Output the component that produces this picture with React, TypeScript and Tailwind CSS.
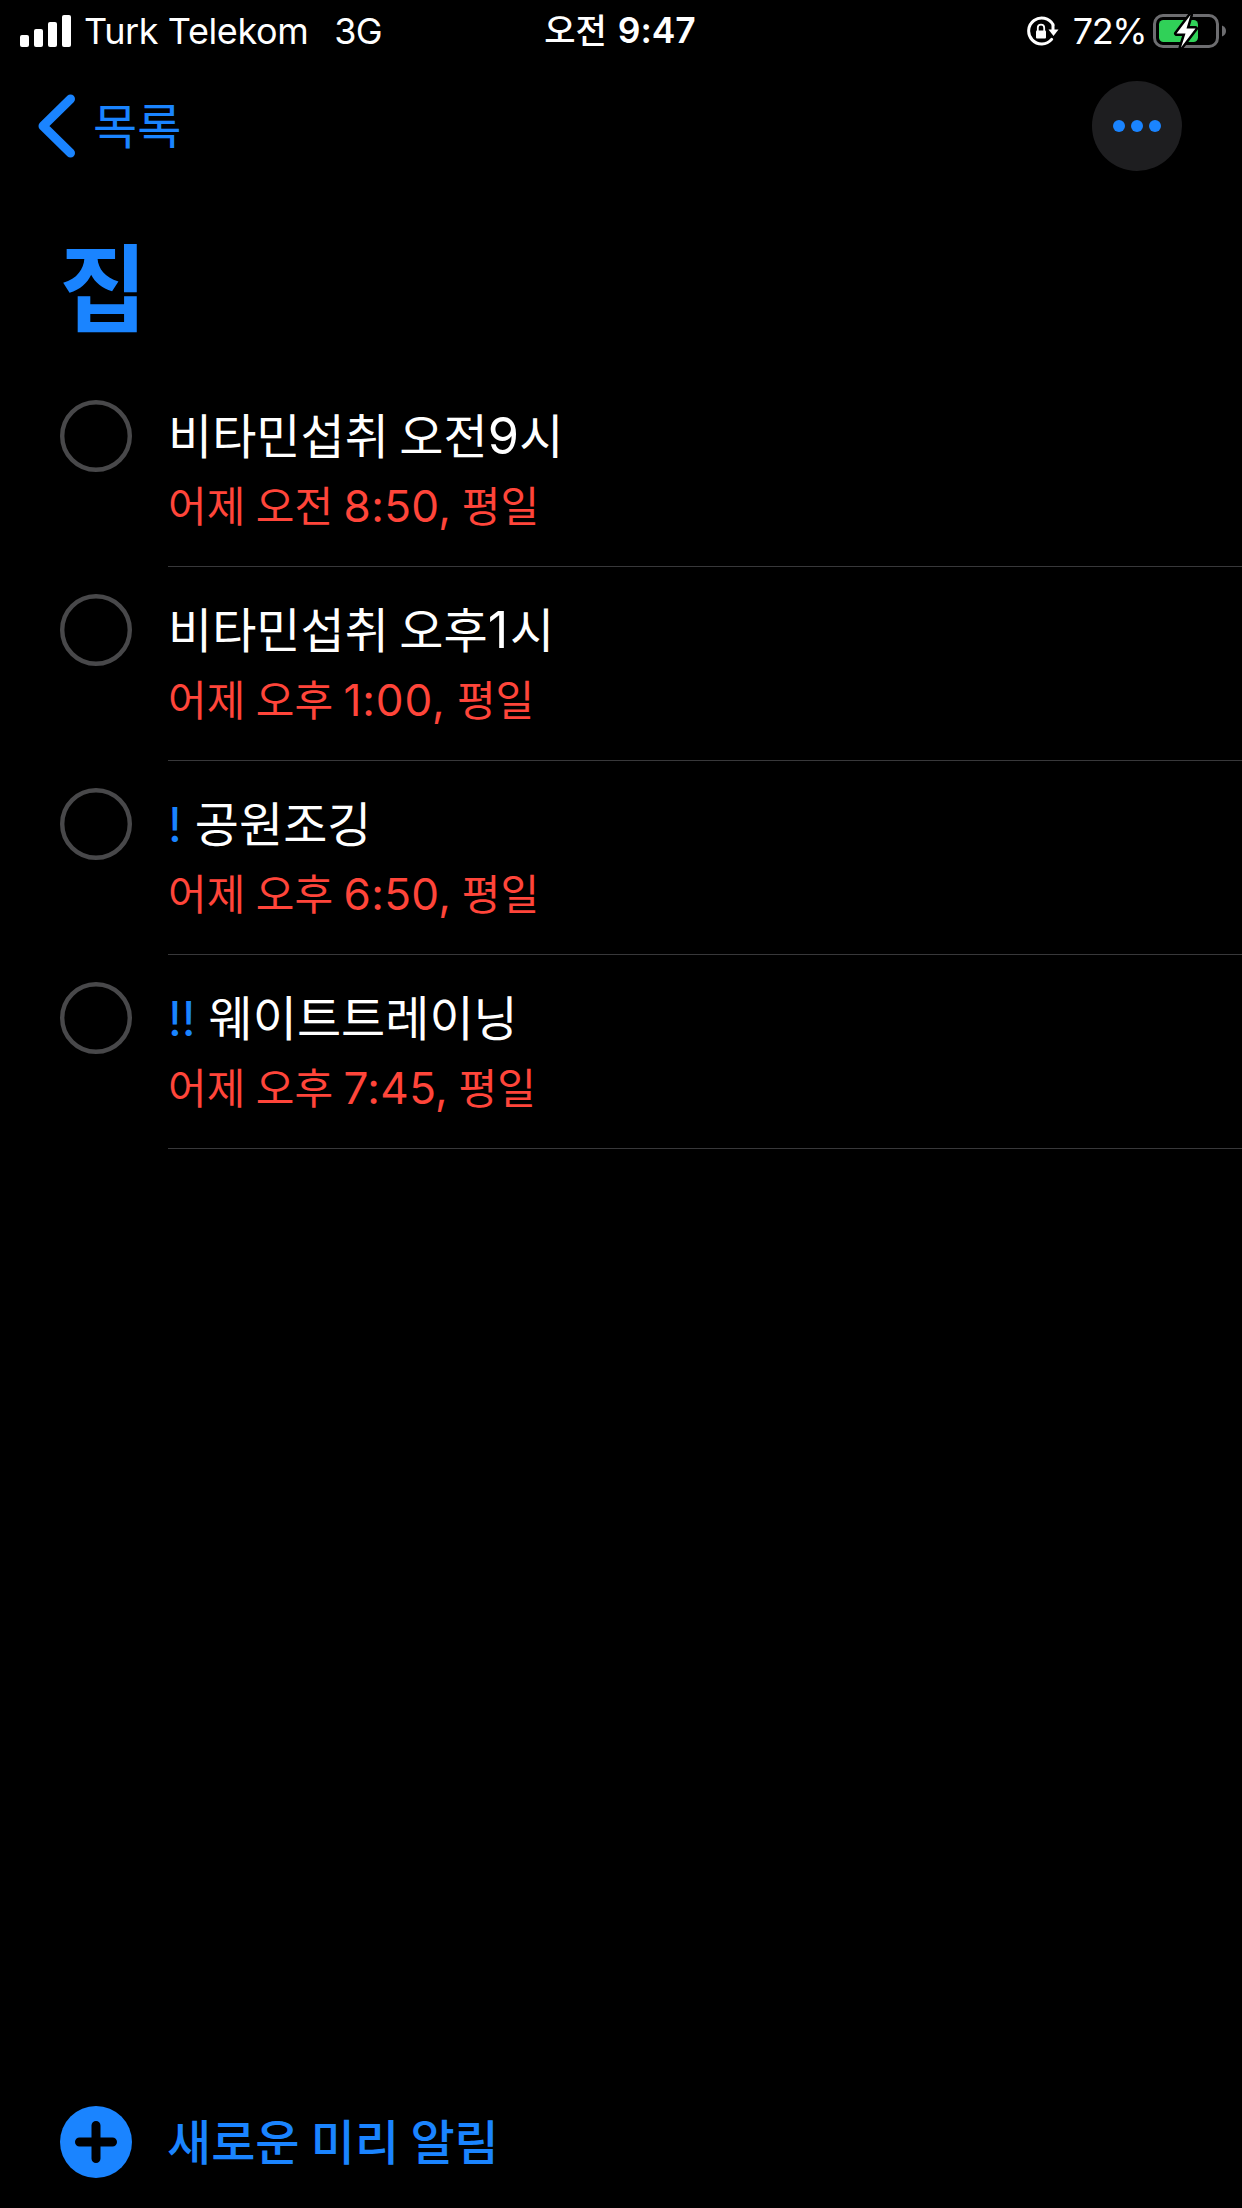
import React from "react";
import clsx from "clsx";

type Priority = "" | "!" | "!!";

const reminders: { title: string; due: string; priority: Priority }[] = [
  { title: "비타민섭취 오전9시", due: "어제 오전 8:50, 평일", priority: "" },
  { title: "비타민섭취 오후1시", due: "어제 오후 1:00, 평일", priority: "" },
  { title: "공원조깅", due: "어제 오후 6:50, 평일", priority: "!" },
  { title: "웨이트트레이닝", due: "어제 오후 7:45, 평일", priority: "!!" },
];

// digits are set a bit larger than the hangul around them
function Mixed({ text }: { text: string }) {
  return (
    <>
      {text.split(/([0-9:,]+)/).map((part, i) =>
        i % 2 ? (
          <span
            key={i}
            className={clsx("text-[1.05em] leading-none tracking-[0.3px]", part[0] === "1" && "pr-px tracking-[0.8px]")}
          >
            {part}
          </span>
        ) : (
          part
        )
      )}
    </>
  );
}

function StatusBar() {
  return (
    <div className="grid h-[60px] grid-cols-3 items-center pl-5 pr-[15px] text-[36px] leading-[60px]">
      <div className="flex items-center">
        <svg width="51" height="32" viewBox="0 0 51 32" fill="white">
          <rect x="0" y="20" width="9" height="12" rx="2" />
          <rect x="14" y="14" width="9" height="18" rx="2" />
          <rect x="28" y="7" width="9" height="25" rx="2" />
          <rect x="42" y="0" width="9" height="32" rx="2" />
        </svg>
        <span className="ml-[13px] whitespace-nowrap tracking-[-0.4px]">Turk Telekom</span>
        <span className="ml-[26px] tracking-[-0.8px]">3G</span>
      </div>

      <div className="-ml-[7px] pt-px text-center text-[34px] font-semibold">
        <span className="mr-[11px] font-medium">오전</span>
        <span className="text-[35.5px]">9:47</span>
      </div>

      <div className="flex items-center justify-end">
        <svg className="mt-[3px]" width="34" height="32" viewBox="0 0 34 32" fill="none">
          <path d="M27 8.6A13 13 0 1 0 25.6 23.4" stroke="white" strokeWidth="3" strokeLinecap="round" />
          <path d="M27 9v6" stroke="white" strokeWidth="3" />
          <path d="M22.5 13.5h10L27.5 20z" fill="white" />
          <rect x="10" y="14.500" width="10" height="8" rx="1" fill="white" />
          <path d="M11.800 15v-3.200a3.200 3.200 0 0 1 6.400 0V15" stroke="white" strokeWidth="1.800" />
        </svg>
        <span className="ml-[13px] tracking-[-1.5px]">72%</span>
        <svg className="ml-[7px]" width="74" height="36" viewBox="0 0 74 36" fill="none">
          <rect x="1.500" y="2.500" width="63" height="31" rx="8.500" stroke="#6d6d70" strokeWidth="3" />
          <path d="M69 12.500c2.800 1 4 3.200 4 5.500s-1.200 4.500-4 5.500z" fill="#6d6d70" />
          <rect x="6" y="7" width="39" height="22" rx="4.500" fill="#30d158" />
          <path
            d="M37.500 2L23.500 20.500h9L28 34.500L42.500 15.500h-9z"
            fill="white"
            stroke="black"
            strokeWidth="5"
            strokeLinejoin="round"
            paintOrder="stroke"
          />
        </svg>
      </div>
    </div>
  );
}

function NavBar() {
  return (
    <div className="flex h-[132px] items-center justify-between pl-[38px] pr-[60px]">
      <button className="flex items-center text-[#1a84ff]">
        <svg width="38" height="64" viewBox="0 0 38 64" fill="none">
          <path d="M32.500 5L5 32L32.500 59" stroke="currentColor" strokeWidth="9" strokeLinecap="round" strokeLinejoin="round" />
        </svg>
        <span className="ml-[17px] pt-[2px] text-[48px] leading-[60px]">목록</span>
      </button>
      <button className="flex size-[90px] items-center justify-center gap-1.5 rounded-full bg-[#1e1e20]">
        <span className="size-3 rounded-full bg-[#1a84ff]" />
        <span className="size-3 rounded-full bg-[#1a84ff]" />
        <span className="size-3 rounded-full bg-[#1a84ff]" />
      </button>
    </div>
  );
}

function ReminderRow({ title, due, priority }: (typeof reminders)[number]) {
  return (
    <li className="flex h-[194px] pl-[60px]">
      <svg className="mt-[27px] shrink-0" width="72" height="72" viewBox="0 0 72 72" fill="none">
        <circle cx="36" cy="36" r="33.8" stroke="#48484a" strokeWidth="4.4" />
      </svg>
      <div className="ml-9 grow border-b border-[#38383a] pt-[33px]">
        <p className="h-[70px] whitespace-nowrap text-[48px] leading-[62px] text-white [word-spacing:-3px]">
          {priority && <span className="mr-[13px] text-[#1a84ff]">{priority}</span>}
          <Mixed text={title} />
        </p>
        <p className="whitespace-nowrap text-[42px] leading-[62px] text-[#ff453a] [word-spacing:-1.3px]">
          <Mixed text={due} />
        </p>
      </div>
    </li>
  );
}

export default function App() {
  return (
    <div className="flex h-[2208px] w-[1242px] flex-col overflow-hidden bg-black font-['Inter','Noto_Sans_CJK_KR',sans-serif] text-white">
      <StatusBar />
      <NavBar />
      <h1 className="h-[181px] pl-[59px] pt-[37px] text-[96px] font-bold leading-[120px] text-[#1a84ff]">집</h1>
      <ul>
        {reminders.map((r) => (
          <ReminderRow key={r.title} {...r} />
        ))}
      </ul>
      <button className="mb-[30px] mt-auto flex items-center pl-[60px] text-[#1a84ff]">
        <svg width="72" height="72" viewBox="0 0 72 72">
          <circle cx="36" cy="36" r="36" fill="currentColor" />
          <path d="M36 19.500v33M19.500 36h33" stroke="black" strokeWidth="9" strokeLinecap="round" />
        </svg>
        <span className="ml-[35px] pt-[2px] text-[48px] font-medium leading-[62px] [word-spacing:-1.5px]">새로운 미리 알림</span>
      </button>
    </div>
  );
}
